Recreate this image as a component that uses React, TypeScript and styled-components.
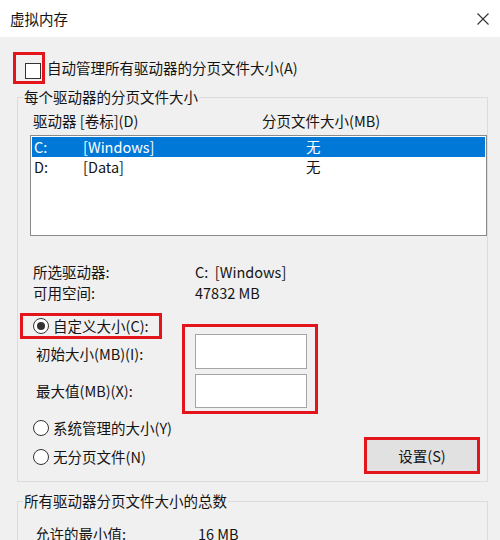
import React from "react";
import styled, { createGlobalStyle } from "styled-components";

const Global = createGlobalStyle`
  html, body { margin: 0; padding: 0; background: #f0f0f0; }
  body {
    font-family: "Noto Sans CJK SC", "Noto Sans", sans-serif;
    font-size: 14.5px;
    color: #141414;
  }
  * { box-sizing: border-box; }
`;

const RED = "#e3141b";

const Window = styled.div`
  width: 500px;
  height: 540px;
  overflow: hidden;
  background: #f0f0f0;
  display: flex;
  flex-direction: column;
`;

const TitleBar = styled.div`
  height: 37px;
  flex: none;
  background: #ffffff;
  display: flex;
  align-items: center;
  justify-content: space-between;
  padding: 0 11px 0 10px;
`;

const Title = styled.span`
  line-height: 20px;
`;

const Body = styled.div`
  padding-top: 15px;
  display: flex;
  flex-direction: column;
`;

const AutoRow = styled.div`
  display: flex;
  align-items: center;
  margin-left: 13px;
  height: 32px;
`;

const RedFrame = styled.div<{ $w: number; $h: number }>`
  width: ${(p) => p.$w}px;
  height: ${(p) => p.$h}px;
  border: 3px solid ${RED};
  flex: none;
`;

const CheckFrame = styled(RedFrame)`
  display: flex;
  align-items: flex-end;
  padding: 0 0 2px 9px;
`;

const CheckBox = styled.span`
  width: 16px;
  height: 16px;
  border: 1px solid #333;
  background: #fff;
  display: block;
`;

const Label = styled.span<{ $ml?: number }>`
  line-height: 20px;
  white-space: pre;
  margin-left: ${(p) => p.$ml ?? 0}px;
`;

const Group = styled.fieldset<{ $mt: number; $pb: number }>`
  margin: ${(p) => p.$mt}px 12px 0 17px;
  padding: 0 0 ${(p) => p.$pb}px 0;
  border: 1px solid #dcdcdc;
  min-width: 0;
`;

const Legend = styled.legend`
  margin-left: 5px;
  padding: 0 1px;
  line-height: 20px;
`;

const GroupInner = styled.div<{ $pt: number }>`
  padding: ${(p) => p.$pt}px 0 0 12px;
  display: flex;
  flex-direction: column;
`;

const ColumnsHeader = styled.div`
  display: grid;
  grid-template-columns: 229px 1fr;
  padding-left: 3px;
  line-height: 20px;
  height: 20px;
`;

const List = styled.div`
  margin-top: 4px;
  height: 101px;
  background: #fff;
  border: 1px solid #8a8a8a;
  padding-top: 1px;
`;

const ListRow = styled.div<{ $selected?: boolean }>`
  display: grid;
  grid-template-columns: 49px 223px 1fr;
  height: 20px;
  line-height: 19px;
  padding-left: 2px;
  margin: 0 1px;
  background: ${(p) => (p.$selected ? "#0078d7" : "transparent")};
  color: ${(p) => (p.$selected ? "#ffffff" : "#141414")};
`;

const Info = styled.div`
  margin-top: 25px;
  display: grid;
  grid-template-columns: 162px 1fr;
  grid-auto-rows: 21px;
  line-height: 21px;
  padding-left: 3px;
  white-space: pre;
`;

const CustomSection = styled.div`
  margin-top: 10px;
  display: flex;
`;

const LeftCol = styled.div`
  width: 152px;
  display: flex;
  flex-direction: column;
`;

const RadioFrame = styled(RedFrame)`
  margin-left: -10px;
  display: flex;
  align-items: center;
  padding-left: 10px;
`;

const Radio = styled.span<{ $checked?: boolean }>`
  width: 16px;
  height: 16px;
  border-radius: 50%;
  border: 1px solid #333;
  background: #fff;
  display: flex;
  align-items: center;
  justify-content: center;
  flex: none;
  &::after {
    content: "";
    width: 8px;
    height: 8px;
    border-radius: 50%;
    background: ${(p) => (p.$checked ? "#333" : "transparent")};
  }
`;

const FieldLabel = styled.div<{ $mt: number }>`
  margin-top: ${(p) => p.$mt}px;
  padding-left: 6px;
  line-height: 20px;
`;

const InputsFrame = styled(RedFrame)`
  margin-top: 11px;
  display: flex;
  flex-direction: column;
  gap: 5px;
  padding: 7px 8px 3px 10px;
`;

const Input = styled.div<{ $h: number }>`
  width: 112px;
  height: ${(p) => p.$h}px;
  background: #fff;
  border: 1px solid #a5a5a5;
`;

const BottomRow = styled.div`
  margin-top: -1px;
  display: flex;
  justify-content: space-between;
  align-items: flex-start;
`;

const RadioList = styled.div`
  display: flex;
  flex-direction: column;
`;

const RadioRow = styled.div`
  height: 29px;
  display: flex;
  align-items: center;
  padding-left: 3px;
  gap: 4px;
  line-height: 20px;
`;

const ButtonFrame = styled(RedFrame)`
  margin-top: 24px;
  margin-right: 7px;
  display: flex;
`;

const Button = styled.div`
  flex: 1;
  background: #e1e1e1;
  display: flex;
  align-items: center;
  justify-content: center;
  line-height: 20px;
`;

const TotalRow = styled.div`
  display: grid;
  grid-template-columns: 163px 1fr;
  padding-left: 5px;
  line-height: 20px;
  white-space: pre;
`;

const CloseIcon = () => (
  <svg width="12" height="12" viewBox="0 0 12 12">
    <path d="M0.5 0.5 L11.5 11.5 M11.5 0.5 L0.5 11.5" stroke="#333" strokeWidth="1.1" fill="none" />
  </svg>
);

export default function App() {
  return (
    <>
      <Global />
      <Window>
        <TitleBar>
          <Title>虚拟内存</Title>
          <CloseIcon />
        </TitleBar>
        <Body>
          <AutoRow>
            <CheckFrame $w={32} $h={32}>
              <CheckBox />
            </CheckFrame>
            <Label $ml={2}>自动管理所有驱动器的分页文件大小(A)</Label>
          </AutoRow>

          <Group $mt={3} $pb={7}>
            <Legend>每个驱动器的分页文件大小</Legend>
            <GroupInner $pt={4}>
              <ColumnsHeader>
                <span>驱动器 [卷标](D)</span>
                <span>分页文件大小(MB)</span>
              </ColumnsHeader>
              <List>
                <ListRow $selected>
                  <span>C:</span>
                  <span>[Windows]</span>
                  <span>无</span>
                </ListRow>
                <ListRow>
                  <span>D:</span>
                  <span>[Data]</span>
                  <span>无</span>
                </ListRow>
              </List>
              <Info>
                <span>所选驱动器:</span>
                <span>C:  [Windows]</span>
                <span>可用空间:</span>
                <span>47832 MB</span>
              </Info>
              <CustomSection>
                <LeftCol>
                  <RadioFrame $w={142} $h={26}>
                    <Radio $checked />
                    <Label $ml={4}>自定义大小(C):</Label>
                  </RadioFrame>
                  <FieldLabel $mt={5}>初始大小(MB)(I):</FieldLabel>
                  <FieldLabel $mt={17}>最大值(MB)(X):</FieldLabel>
                </LeftCol>
                <InputsFrame $w={136} $h={90}>
                  <Input $h={35} />
                  <Input $h={34} />
                </InputsFrame>
              </CustomSection>
              <BottomRow>
                <RadioList>
                  <RadioRow>
                    <Radio />
                    <span>系统管理的大小(Y)</span>
                  </RadioRow>
                  <RadioRow>
                    <Radio />
                    <span>无分页文件(N)</span>
                  </RadioRow>
                </RadioList>
                <ButtonFrame $w={116} $h={37}>
                  <Button>设置(S)</Button>
                </ButtonFrame>
              </BottomRow>
            </GroupInner>
          </Group>

          <Group $mt={9} $pb={20}>
            <Legend>所有驱动器分页文件大小的总数</Legend>
            <GroupInner $pt={13}>
              <TotalRow>
                <span>允许的最小值:</span>
                <span>16 MB</span>
              </TotalRow>
            </GroupInner>
          </Group>
        </Body>
      </Window>
    </>
  );
}
